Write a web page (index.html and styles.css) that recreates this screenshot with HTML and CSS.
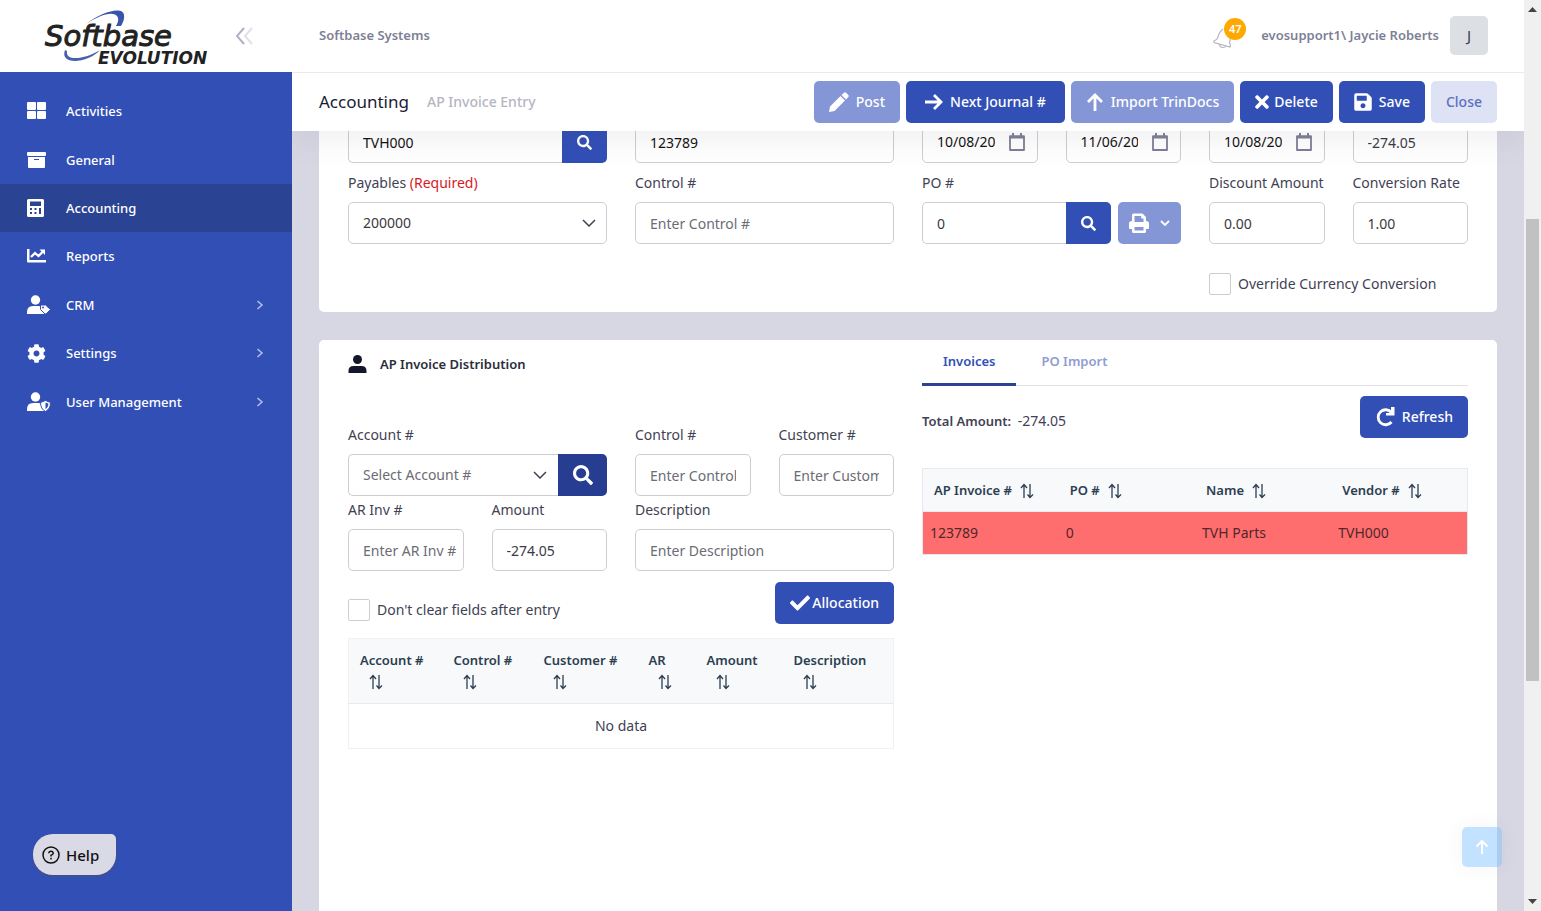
FILE: index.html
```html
<!DOCTYPE html>
<html lang="en">
<head>
    <meta charset="UTF-8">
    <title>AP Invoice Entry</title>
    <link rel="stylesheet" href="styles.css">
</head>
<body>
<svg class="symbols" aria-hidden="true">
    <symbol id="search" viewBox="0 0 512 512"><path d="M505 442.7L405.3 343c-4.5-4.5-10.6-7-17-7H372c27.6-35.3 44-79.7 44-128C416 93.1 322.9 0 208 0S0 93.1 0 208s93.1 208 208 208c48.3 0 92.7-16.4 128-44v16.3c0 6.4 2.5 12.5 7 17l99.7 99.7c9.4 9.4 24.6 9.4 33.9 0l28.3-28.3c9.4-9.4 9.4-24.6.1-34zM208 336c-70.7 0-128-57.2-128-128 0-70.7 57.2-128 128-128 70.7 0 128 57.2 128 128 0 70.7-57.2 128-128 128z"/></symbol>
    <symbol id="sort" viewBox="0 0 14 16"><path d="M4 15V2M1 5l3-3.500 3 3.500M10 1v13M7.500 11.500l2.500 3 3-3" fill="none" stroke="currentColor" stroke-width="1.300"/></symbol>
    <symbol id="calendar" viewBox="0 0 18 20"><path d="M2 4.500h14v13.500H2z" fill="none" stroke="currentColor" stroke-width="1.800" stroke-linejoin="round"/><path d="M1.500 3.500h15v3h-15zM4 1h2v3H4zM12 1h2v3h-2z"/></symbol>
    <symbol id="down" viewBox="0 0 14 8"><path d="M1 1l6 6 6-6" fill="none" stroke="currentColor" stroke-width="1.500"/></symbol>
    <symbol id="next" viewBox="0 0 8 10"><path d="M1.500 1l4.500 4-4.500 4" fill="none" stroke="currentColor" stroke-width="1.500"/></symbol>
    <symbol id="user" viewBox="0 0 24 20"><circle cx="8.500" cy="5" r="4.700"/><path d="M0 19v-2q0-6 6-6h5.500q6 0 6 6v2z"/></symbol>
</svg>

<div class="app">
    <aside class="sidebar">
        <div class="brand">
            <svg class="logo" width="180" height="64" viewBox="0 0 180 64" role="img" aria-label="Softbase Evolution">
                <path d="M51 20C68 7 88 2 89 11q1 4-3 11h-5q4-7 1-10C77 7 65 11 51 20z" fill="#3a53ab"/>
                <path d="M30 46c-6 16 24 13 35 0-14 9-35 12-33 1z" fill="#4660ad"/>
                <text x="10" y="42" class="logo-name">Softbase</text>
                <text x="63" y="60" class="logo-edition">EVOLUTION</text>
            </svg>
            <button class="collapse" aria-label="Collapse menu">
                <svg width="18" height="18" viewBox="0 0 18 18" fill="none" stroke-width="2"><path d="M9 1L2 9l7 8" stroke="#b0b2c6"/><path d="M17 1l-7 8 7 8" stroke="#dfe0ea"/></svg>
            </button>
        </div>
        <nav>
            <ul class="menu">
                <li><a href="#"><span class="menu-icon"><svg width="20" height="18" viewBox="0 0 20 18"><rect width="9" height="8" rx="1"/><rect x="10" width="9" height="8" rx="1"/><rect y="9" width="9" height="8" rx="1"/><rect x="10" y="9" width="9" height="8" rx="1"/></svg></span>Activities</a></li>
                <li><a href="#"><span class="menu-icon"><svg width="20" height="18" viewBox="0 0 20 18"><rect y="1" width="19" height="4" rx="1"/><path fill-rule="evenodd" d="M1 6h17v10q0 1-1 1H2q-1 0-1-1zM7 8v1h5V8z"/></svg></span>General</a></li>
                <li><a href="#" class="active"><span class="menu-icon"><svg width="18" height="20" viewBox="0 0 18 20"><path fill-rule="evenodd" d="M1.500 1h14q1.500 0 1.500 1.500v15q0 1.500-1.500 1.500h-14Q0 19 0 17.500v-15Q0 1 1.500 1zM3 3.500V8h11V3.500zM3 10v2h2v-2zM7.500 10v2h2v-2zM12 10v6h2v-6zM3 14v2h2v-2zM7.500 14v2h2v-2z"/></svg></span>Accounting</a></li>
                <li><a href="#"><span class="menu-icon"><svg width="20" height="16" viewBox="0 0 20 16"><path d="M0 1h2.500v11H19v2.500H1Q0 14.500 0 13.500z"/><path d="M4 9l4-4 3.500 3L16 3.500" fill="none" stroke="#fff" stroke-width="2.300"/><path d="M12.500 1.500H18V7z"/></svg></span>Reports</a></li>
                <li><a href="#"><span class="menu-icon"><svg width="24" height="20"><use href="#user"/><path d="M13.500 10h5l5 4.500-4.500 4.500h-1l-4.500-4.500z" stroke="#324fb6" stroke-width="1"/><circle cx="16" cy="12.500" r="1" fill="#324fb6"/></svg></span>CRM<svg class="menu-arrow"><use href="#next"/></svg></a></li>
                <li><a href="#"><span class="menu-icon"><svg width="19" height="19" viewBox="0 0 512 512"><path d="M487.4 315.7l-42.6-24.600c4.300-23.200 4.300-47 0-70.200l42.600-24.600c4.900-2.800 7.100-8.600 5.500-14-11.100-35.600-30-67.800-54.700-94.600-3.800-4.100-10-5.100-14.800-2.300L380.800 110c-17.900-15.400-38.500-27.300-60.800-35.100V25.800c0-5.600-3.900-10.500-9.400-11.700-36.700-8.200-74.300-7.800-109.200 0-5.500 1.200-9.400 6.100-9.400 11.700V75c-22.200 7.900-42.800 19.800-60.800 35.100L88.700 85.500c-4.900-2.800-11-1.900-14.800 2.300-24.700 26.700-43.600 58.900-54.700 94.600-1.700 5.400.6 11.200 5.500 14L67.300 221c-4.300 23.200-4.300 47 0 70.200l-42.600 24.600c-4.900 2.800-7.100 8.600-5.500 14 11.100 35.600 30 67.800 54.700 94.600 3.800 4.100 10 5.100 14.800 2.300l42.600-24.600c17.900 15.400 38.500 27.300 60.800 35.100v49.200c0 5.600 3.900 10.500 9.400 11.700 36.700 8.200 74.300 7.800 109.200 0 5.500-1.200 9.400-6.100 9.400-11.700v-49.200c22.200-7.900 42.800-19.800 60.800-35.100l42.600 24.600c4.900 2.800 11 1.900 14.800-2.300 24.700-26.700 43.600-58.900 54.700-94.600 1.500-5.500-.7-11.300-5.600-14.100zM256 336c-44.100 0-80-35.900-80-80s35.900-80 80-80 80 35.900 80 80-35.900 80-80 80z"/></svg></span>Settings<svg class="menu-arrow"><use href="#next"/></svg></a></li>
                <li><a href="#"><span class="menu-icon"><svg width="24" height="20"><use href="#user"/><path d="M18.500 8.500l5 2q0 6.500-5 9-5-2.500-5-9z" stroke="#324fb6" stroke-width="1"/><path d="M18.500 10.500l3 1.200q-.3 3.800-3 5.600z" fill="#324fb6"/></svg></span>User Management<svg class="menu-arrow"><use href="#next"/></svg></a></li>
            </ul>
        </nav>
        <button class="help"><svg width="18" height="18" viewBox="0 0 18 18" fill="none" stroke="#111" stroke-width="1.500"><circle cx="9" cy="9" r="8"/><path d="M6.800 7.300Q7 5.300 9 5.300t2.200 1.900Q11.200 8.500 9 9.300v1.200M9 11.800v1.600"/></svg>Help</button>
    </aside>

    <div class="main">
        <header class="topbar">
            <span class="company">Softbase Systems</span>
            <div class="account">
                <button class="bell" aria-label="Notifications">
                    <svg width="24" height="24" viewBox="0 0 24 24" fill="none" stroke="#b4b4bf" stroke-width="1.200"><path d="M11 4Q7 7 6 12q-.5 2.500-4 4v1.500L18 22l.5-1.500Q17 18 18 14M7.500 19q0 3.500 3.500 3.500 2 0 3-1.500"/></svg>
                    <span class="badge">47</span>
                </button>
                <span>evosupport1\ Jaycie Roberts</span>
                <span class="avatar">J</span>
            </div>
        </header>

        <div class="toolbar">
            <h1>Accounting</h1>
            <span class="crumb">AP Invoice Entry</span>
            <div class="actions">
                <button class="btn muted"><svg width="20" height="20" viewBox="0 0 20 20"><path d="M0 20l1-5.500L11.500 4l4.500 4.500L5.500 19zM12.500 3L15 .7q1-.8 2 0L19.300 3q.8 1 0 2L17 7.500z"/></svg>Post</button>
                <button class="btn wide"><svg width="18" height="18" viewBox="0 0 18 18" fill="none" stroke="#fff" stroke-width="2.800"><path d="M0 9h16M9 2l7 7-7 7"/></svg>Next Journal #</button>
                <button class="btn muted"><svg width="18" height="18" viewBox="0 0 18 18" fill="none" stroke="#fff" stroke-width="2.800"><path d="M9 18V2M2 9l7-7 7 7"/></svg>Import TrinDocs</button>
                <button class="btn tight"><svg width="14" height="20" viewBox="0 0 352 512"><path d="M242.720 256l100.070-100.070c12.280-12.280 12.280-32.190 0-44.480l-22.240-22.240c-12.280-12.280-32.190-12.280-44.480 0L176 189.280 75.930 89.210c-12.280-12.280-32.190-12.280-44.480 0L9.210 111.450c-12.280 12.280-12.280 32.190 0 44.480L109.280 256 9.210 356.070c-12.280 12.280-12.280 32.190 0 44.480l22.240 22.240c12.280 12.280 32.200 12.280 44.480 0L176 322.720l100.070 100.070c12.280 12.280 32.200 12.280 44.480 0l22.240-22.240c12.280-12.280 12.280-32.190 0-44.480L242.720 256z"/></svg>Delete</button>
                <button class="btn"><svg width="18" height="20" viewBox="0 0 448 512"><path d="M433.941 129.941l-83.882-83.882A48 48 0 0 0 316.118 32H48C21.490 32 0 53.490 0 80v352c0 26.510 21.490 48 48 48h352c26.510 0 48-21.490 48-48V163.882a48 48 0 0 0-14.059-33.941zM224 416c-35.346 0-64-28.654-64-64 0-35.346 28.654-64 64-64s64 28.654 64 64c0 35.346-28.654 64-64 64zm96-304.520V212c0 6.627-5.373 12-12 12H76c-6.627 0-12-5.373-12-12V108c0-6.627 5.373-12 12-12h228.520c3.183 0 6.235 1.264 8.485 3.515l3.480 3.480A11.996 11.996 0 0 1 320 111.480z"/></svg>Save</button>
                <button class="btn light">Close</button>
            </div>
        </div>

        <main class="content">
            <section class="card invoice">
                <div class="fields">
                    <div class="field span2"><div class="group"><input class="input" aria-label="Vendor" value="TVH000"><button class="btn find" aria-label="Find vendor"><svg width="15" height="15"><use href="#search"/></svg></button></div></div>
                    <div class="field span2"><input class="input" aria-label="Invoice" value="123789"></div>
                    <div class="field"><div class="date"><input aria-label="Invoice date" value="10/08/2021"><button aria-label="Pick invoice date"><svg width="18" height="20"><use href="#calendar"/></svg></button></div></div>
                    <div class="field"><div class="date"><input aria-label="Due date" value="11/06/2021"><button aria-label="Pick due date"><svg width="18" height="20"><use href="#calendar"/></svg></button></div></div>
                    <div class="field"><div class="date"><input aria-label="Effective date" value="10/08/2021"><button aria-label="Pick effective date"><svg width="18" height="20"><use href="#calendar"/></svg></button></div></div>
                    <div class="field"><input class="input soft" aria-label="Invoice amount" value="-274.05"></div>

                    <div class="field span2">
                        <label for="payables">Payables <span class="required">(Required)</span></label>
                        <div class="select"><select id="payables" class="input soft"><option>200000</option></select><svg><use href="#down"/></svg></div>
                    </div>
                    <div class="field span2">
                        <label for="control">Control #</label>
                        <input id="control" class="input" placeholder="Enter Control #">
                    </div>
                    <div class="field span2">
                        <label for="po">PO #</label>
                        <div class="group">
                            <input id="po" class="input soft" value="0">
                            <button class="btn find" aria-label="Find PO"><svg width="15" height="15"><use href="#search"/></svg></button>
                            <button class="btn muted print" aria-label="Print">
                                <svg width="20" height="20" viewBox="0 0 20 20"><path fill-rule="evenodd" d="M3 8V2q0-1.500 1.500-1.500h9L17 4v4q3 0 3 2.500V15q0 1-1 1h-2v2.500q0 1.500-1.500 1.500h-11Q3 20 3 18.500V16H1q-1 0-1-1v-4.500Q0 8 3 8zM5.500 3v6h9V5.500h-2.300V3zM5.500 14v3.500h9V14z"/></svg>
                                <svg width="10" height="6" viewBox="0 0 10 6" fill="none" stroke="#fff" stroke-width="1.800"><path d="M1 1l4 4 4-4"/></svg>
                            </button>
                        </div>
                    </div>
                    <div class="field">
                        <label for="discount">Discount Amount</label>
                        <input id="discount" class="input soft" value="0.00">
                    </div>
                    <div class="field">
                        <label for="rate">Conversion Rate</label>
                        <input id="rate" class="input soft" value="1.00">
                    </div>
                </div>
                <div class="fields override">
                    <label class="check"><input type="checkbox">Override Currency Conversion</label>
                </div>
            </section>

            <section class="card distribution">
                <div class="half">
                    <h2><svg width="20" height="18" viewBox="0 0 20 18"><circle cx="9.500" cy="4.500" r="4.500"/><path d="M.500 18v-2q0-5 5-5h8q5 0 5 5v2z"/></svg>AP Invoice Distribution</h2>
                    <div class="fields four">
                        <div class="field span2">
                            <label for="acct">Account #</label>
                            <div class="group">
                                <div class="select"><select id="acct" class="input faded"><option>Select Account #</option></select><svg><use href="#down"/></svg></div>
                                <button class="btn find big" aria-label="Find account"><svg width="20" height="20"><use href="#search"/></svg></button>
                            </div>
                        </div>
                        <div class="field"><label for="ctl">Control #</label><input id="ctl" class="input" placeholder="Enter Control #"></div>
                        <div class="field"><label for="cust">Customer #</label><input id="cust" class="input" placeholder="Enter Customer #"></div>
                        <div class="field"><label for="ar">AR Inv #</label><input id="ar" class="input ar" placeholder="Enter AR Inv #"></div>
                        <div class="field"><label for="amount">Amount</label><input id="amount" class="input soft" value="-274.05"></div>
                        <div class="field span2"><label for="desc">Description</label><input id="desc" class="input" placeholder="Enter Description"></div>
                    </div>
                    <div class="entry">
                        <label class="check"><input type="checkbox">Don't clear fields after entry</label>
                        <button class="btn allocation"><svg width="20" height="20" viewBox="0 0 512 512"><path d="M173.898 439.404l-166.400-166.400c-9.997-9.997-9.997-26.206 0-36.204l36.203-36.204c9.997-9.998 26.207-9.998 36.204 0L192 312.690 432.095 72.596c9.997-9.997 26.207-9.997 36.204 0l36.203 36.204c9.997 9.997 9.997 26.206 0 36.204l-294.400 294.401c-9.998 9.997-26.207 9.997-36.204-.001z"/></svg>Allocation</button>
                    </div>
                    <table class="grid lines">
                        <thead>
                            <tr>
                                <th class="c-account">Account # <svg><use href="#sort"/></svg></th>
                                <th class="c-control">Control # <svg><use href="#sort"/></svg></th>
                                <th class="c-customer">Customer # <svg><use href="#sort"/></svg></th>
                                <th class="c-ar">AR <svg><use href="#sort"/></svg></th>
                                <th class="c-amount">Amount <svg><use href="#sort"/></svg></th>
                                <th>Description <svg><use href="#sort"/></svg></th>
                            </tr>
                        </thead>
                        <tbody>
                            <tr><td colspan="6" class="empty">No data</td></tr>
                        </tbody>
                    </table>
                </div>

                <div class="half">
                    <div class="tabs">
                        <button class="tab active">Invoices</button>
                        <button class="tab">PO Import</button>
                    </div>
                    <div class="total">
                        <span><b>Total Amount:</b> -274.05</span>
                        <button class="btn refresh"><svg width="20" height="20" viewBox="0 0 20 20"><path d="M16.500 5.500A7.500 7.500 0 1 0 16.500 15" fill="none" stroke="#fff" stroke-width="2.800"/><path d="M19.500 0v8.500H11V6h5V0z"/></svg>Refresh</button>
                    </div>
                    <table class="grid invoices">
                        <thead>
                            <tr>
                                <th>AP Invoice # <svg><use href="#sort"/></svg></th>
                                <th>PO # <svg><use href="#sort"/></svg></th>
                                <th>Name <svg><use href="#sort"/></svg></th>
                                <th>Vendor # <svg><use href="#sort"/></svg></th>
                            </tr>
                        </thead>
                        <tbody>
                            <tr><td>123789</td><td>0</td><td>TVH Parts</td><td>TVH000</td></tr>
                        </tbody>
                    </table>
                </div>
            </section>
        </main>
    </div>

    <div class="scrollbar" aria-hidden="true">
        <svg width="9" height="5" viewBox="0 0 9 5"><path d="M0 5l4.500-5L9 5z"/></svg>
        <div class="track"><div class="thumb"></div></div>
        <svg width="9" height="5" viewBox="0 0 9 5"><path d="M0 0l4.500 5L9 0z"/></svg>
    </div>
</div>

<a href="#" class="to-top" aria-label="Back to top"><svg width="14" height="16" viewBox="0 0 14 16" fill="none" stroke="#fff" stroke-width="2"><path d="M7 15V2M1.500 7.500L7 2l5.500 5.500"/></svg></a>
</body>
</html>
```
FILE: styles.css
```css
* {
    box-sizing: border-box;
}
body {
    margin: 0;
    font-family: "Noto Sans", "Open Sans", sans-serif;
    font-size: 14px;
    line-height: 22px;
    color: #3f4254;
}
button, input, select {
    font: inherit;
    color: inherit;
    margin: 0;
}
button {
    border: 0;
    padding: 0;
    background: none;
}
svg {
    display: block;
    flex: none;
}
svg:not([fill]) {
    fill: currentColor;
}
.symbols {
    position: absolute;
    width: 0;
    height: 0;
}
.app {
    display: flex;
    height: 100vh;
    overflow: hidden;
}

/* sidebar */
.sidebar {
    width: 292px;
    flex: none;
    display: flex;
    flex-direction: column;
    background: #324fb6;
    color: #fff;
}
.brand {
    height: 72px;
    background: #fff;
    display: flex;
    align-items: center;
    justify-content: space-between;
    padding: 0 39px 0 35px;
}
.logo-name {
    font: italic 400 29px "DejaVu Sans", sans-serif;
    fill: #222;
    stroke: #222;
    stroke-width: 1px;
}
.logo-edition {
    font: italic 700 17px "DejaVu Sans", sans-serif;
    fill: #222;
}
.menu {
    list-style: none;
    margin: 15px 0 0;
    padding: 0;
    display: grid;
    grid-auto-rows: 1fr;
    height: 339px;
    font-size: 13px;
}
.menu a {
    display: flex;
    align-items: center;
    height: 100%;
    padding: 0 28px 0 27px;
    color: #fff;
    font-weight: 500;
    text-decoration: none;
}
.menu a.active {
    background: #2a4393;
}
.menu-icon {
    width: 39px;
}
.menu-arrow {
    width: 8px;
    height: 10px;
    margin-left: auto;
    color: #b7c1ec;
}
.help {
    display: flex;
    align-items: center;
    gap: 6px;
    align-self: flex-start;
    margin: auto 0 36px 33px;
    height: 41px;
    padding: 0 17px 0 9px;
    border-radius: 20px 5px 20px 20px;
    background: #dadae6;
    box-shadow: 0 1px 3px #4a5072;
    color: #111;
    font-size: 15px;
    font-weight: 500;
}

/* header */
.main {
    flex: 1;
    min-width: 0;
    display: flex;
    flex-direction: column;
    background: #d7d7e4;
}
.topbar {
    position: relative;
    z-index: 2;
    flex: none;
    height: 73px;
    padding: 0 36px 2px 27px;
    display: flex;
    align-items: center;
    justify-content: space-between;
    background: #fff;
    border-bottom: 1px solid #ebebef;
    color: #7e7f96;
    font-size: 13px;
    font-weight: 600;
}
.account {
    display: flex;
    align-items: center;
    gap: 11px;
}
.bell {
    position: relative;
    width: 34px;
    height: 34px;
    margin-right: 4px;
    padding-top: 4px;
}
.badge {
    position: absolute;
    top: 0;
    right: 0;
    width: 22px;
    height: 22px;
    border-radius: 50%;
    background: #ffa800;
    color: #fff;
    font-size: 11px;
    text-align: center;
}
.avatar {
    width: 38px;
    height: 39px;
    border-radius: 5px;
    background: #dcdfe3;
    color: #3b4250;
    font-size: 15px;
    font-weight: 400;
    line-height: 39px;
    text-align: center;
}
.toolbar {
    position: relative;
    z-index: 1;
    flex: none;
    height: 58px;
    padding: 0 27px;
    display: flex;
    align-items: center;
    background: #fff;
    box-shadow: 0 10px 30px rgba(60, 60, 90, .08);
    clip-path: inset(0 0 -40px 0);
}
h1 {
    margin: 0 18px 0 0;
    font-size: 17px;
    font-weight: 400;
    color: #181c32;
}
.crumb {
    color: #b5b5c3;
    font-weight: 500;
}
.actions {
    display: flex;
    gap: 6px;
    margin-left: auto;
}
.btn {
    display: flex;
    align-items: center;
    justify-content: center;
    gap: 7px;
    height: 42px;
    padding: 0 15px;
    border-radius: 5px;
    background: #324fb6;
    color: #fff;
    font-weight: 500;
    white-space: nowrap;
}
.btn.muted {
    background: #8596d6;
}
.btn.light {
    background: #dee2f5;
    color: #5d70c0;
}
.btn.wide {
    padding: 0 19px;
}
.btn.tight {
    gap: 5px;
}

/* cards */
.content {
    flex: 1;
    min-height: 0;
    display: flex;
    flex-direction: column;
    gap: 28px;
    padding: 0 27px;
    overflow: hidden;
}
.card {
    background: #fff;
    border-radius: 5px;
    padding: 0 29px;
}
.card.invoice {
    margin-top: -10px;
    padding-bottom: 17px;
}
.card.distribution {
    flex: 1;
    display: grid;
    grid-template-columns: 1fr 1fr;
    gap: 28px;
    border-radius: 5px 5px 0 0;
}
.half {
    min-width: 0;
}
.fields {
    display: grid;
    grid-template-columns: repeat(8, 1fr);
    gap: 9px 28px;
}
.fields.four {
    grid-template-columns: repeat(4, 1fr);
    row-gap: 3px;
}
.field {
    min-width: 0;
    display: flex;
    flex-direction: column;
    gap: 8px;
}
.field label {
    white-space: nowrap;
}
.span2 {
    grid-column: span 2;
}
.required {
    color: #d8191f;
}
.input {
    width: 100%;
    min-width: 0;
    height: 42px;
    padding: 0 14px;
    border: 1px solid #cdcdd3;
    border-radius: 5px;
    background: none;
    color: #111;
    appearance: none;
}
.input.soft {
    color: #3a3a42;
}
.input.faded, .input::placeholder {
    color: #6c6c74;
    opacity: 1;
}
.input.ar {
    padding-right: 6px;
}
.group {
    display: flex;
}
.group .input {
    border-right: 0;
    border-radius: 5px 0 0 5px;
}
.find {
    width: 45px;
    flex: none;
    padding: 0;
    border-radius: 0 5px 5px 0;
}
.find.big {
    width: 49px;
    background: #273d92;
}
.print {
    width: 63px;
    flex: none;
    margin-left: 7px;
    padding: 0;
    gap: 11px;
}
.select {
    flex: 1;
    min-width: 0;
    display: grid;
    align-items: center;
}
.select > * {
    grid-area: 1 / 1;
}
.select svg {
    width: 14px;
    height: 8px;
    justify-self: end;
    margin-right: 11px;
    pointer-events: none;
}
.date {
    display: flex;
    align-items: center;
    height: 42px;
    padding: 0 11px 0 14px;
    border: 1px solid #cdcdd3;
    border-radius: 5px;
}
.date input {
    flex: 1;
    min-width: 0;
    padding: 0;
    border: 0;
    background: none;
    color: #111;
}
.date button {
    margin-left: 13px;
    color: #7e7f96;
}
.check {
    display: flex;
    align-items: center;
    gap: 7px;
}
.check input {
    appearance: none;
    width: 22px;
    height: 22px;
    border: 1px solid #cdcdd3;
    border-radius: 2px;
}
.override {
    margin-top: 29px;
}
.override .check {
    grid-column: 7 / 9;
    white-space: nowrap;
}

/* distribution */
h2 {
    display: flex;
    align-items: center;
    gap: 12px;
    height: 48px;
    margin: 0 0 36px;
    font-size: 13px;
    font-weight: 600;
    color: #2b2d3a;
}
h2 svg {
    color: #14172b;
}
.entry {
    display: flex;
    justify-content: space-between;
    align-items: flex-end;
    margin: 11px 0 14px;
}
.entry .check {
    padding-bottom: 3px;
}
.allocation {
    gap: 2px;
}
.grid {
    width: 100%;
    table-layout: fixed;
    border-collapse: collapse;
    border: 1px solid #e6e9ee;
}
.grid th {
    padding: 10px 0 10px 11px;
    background: #f7f9fb;
    border-bottom: 1px solid #e6e9ee;
    color: #2c3e50;
    font-size: 13px;
    font-weight: 600;
    text-align: left;
}
.grid th svg {
    display: inline-block;
    width: 14px;
    height: 16px;
    margin-left: 5px;
    vertical-align: -4px;
}
.lines {
    border-color: #f0f1f4;
}
.lines th svg {
    display: block;
    margin: 3px 0 3px 9px;
}
.c-account { width: 94px; }
.c-control { width: 90px; }
.c-customer { width: 105px; }
.c-ar { width: 58px; }
.c-amount { width: 87px; }
.empty {
    padding: 11px 0;
    text-align: center;
}
.tabs {
    display: flex;
    gap: 4px;
    height: 46px;
    border-bottom: 1px solid #e1e3ea;
}
.tab {
    height: 46px;
    padding: 0 21px 1px;
    border-bottom: 3px solid transparent;
    color: #8f9cd0;
    font-size: 13px;
    font-weight: 600;
}
.tab.active {
    color: #324fb6;
    border-color: #2a4393;
}
.total {
    display: flex;
    justify-content: space-between;
    align-items: flex-end;
    margin: 10px 0 30px;
}
.total span {
    padding-bottom: 6px;
}
.total b {
    margin-right: 3px;
    font-size: 13px;
    font-weight: 600;
}
.invoices td {
    padding: 10px 7px;
    background: #ff6e6e;
    color: #50262b;
}

/* window scrollbar */
.scrollbar {
    flex: none;
    width: 17px;
    padding: 7px 0;
    display: flex;
    flex-direction: column;
    align-items: center;
    background: #f0f0f0;
    color: #444;
}
.track {
    flex: 1;
    width: 13px;
    margin: 5px 0;
    display: grid;
    grid-template-rows: 202fr 462fr 213fr;
}
.thumb {
    grid-row: 2;
    background: #c1c1c1;
}
.to-top {
    position: fixed;
    right: 39px;
    bottom: 44px;
    width: 40px;
    height: 40px;
    display: flex;
    align-items: center;
    justify-content: center;
    border-radius: 5px;
    background: rgba(110, 185, 255, .42);
    box-shadow: 0 0 20px rgba(60, 60, 90, .06);
}
```
